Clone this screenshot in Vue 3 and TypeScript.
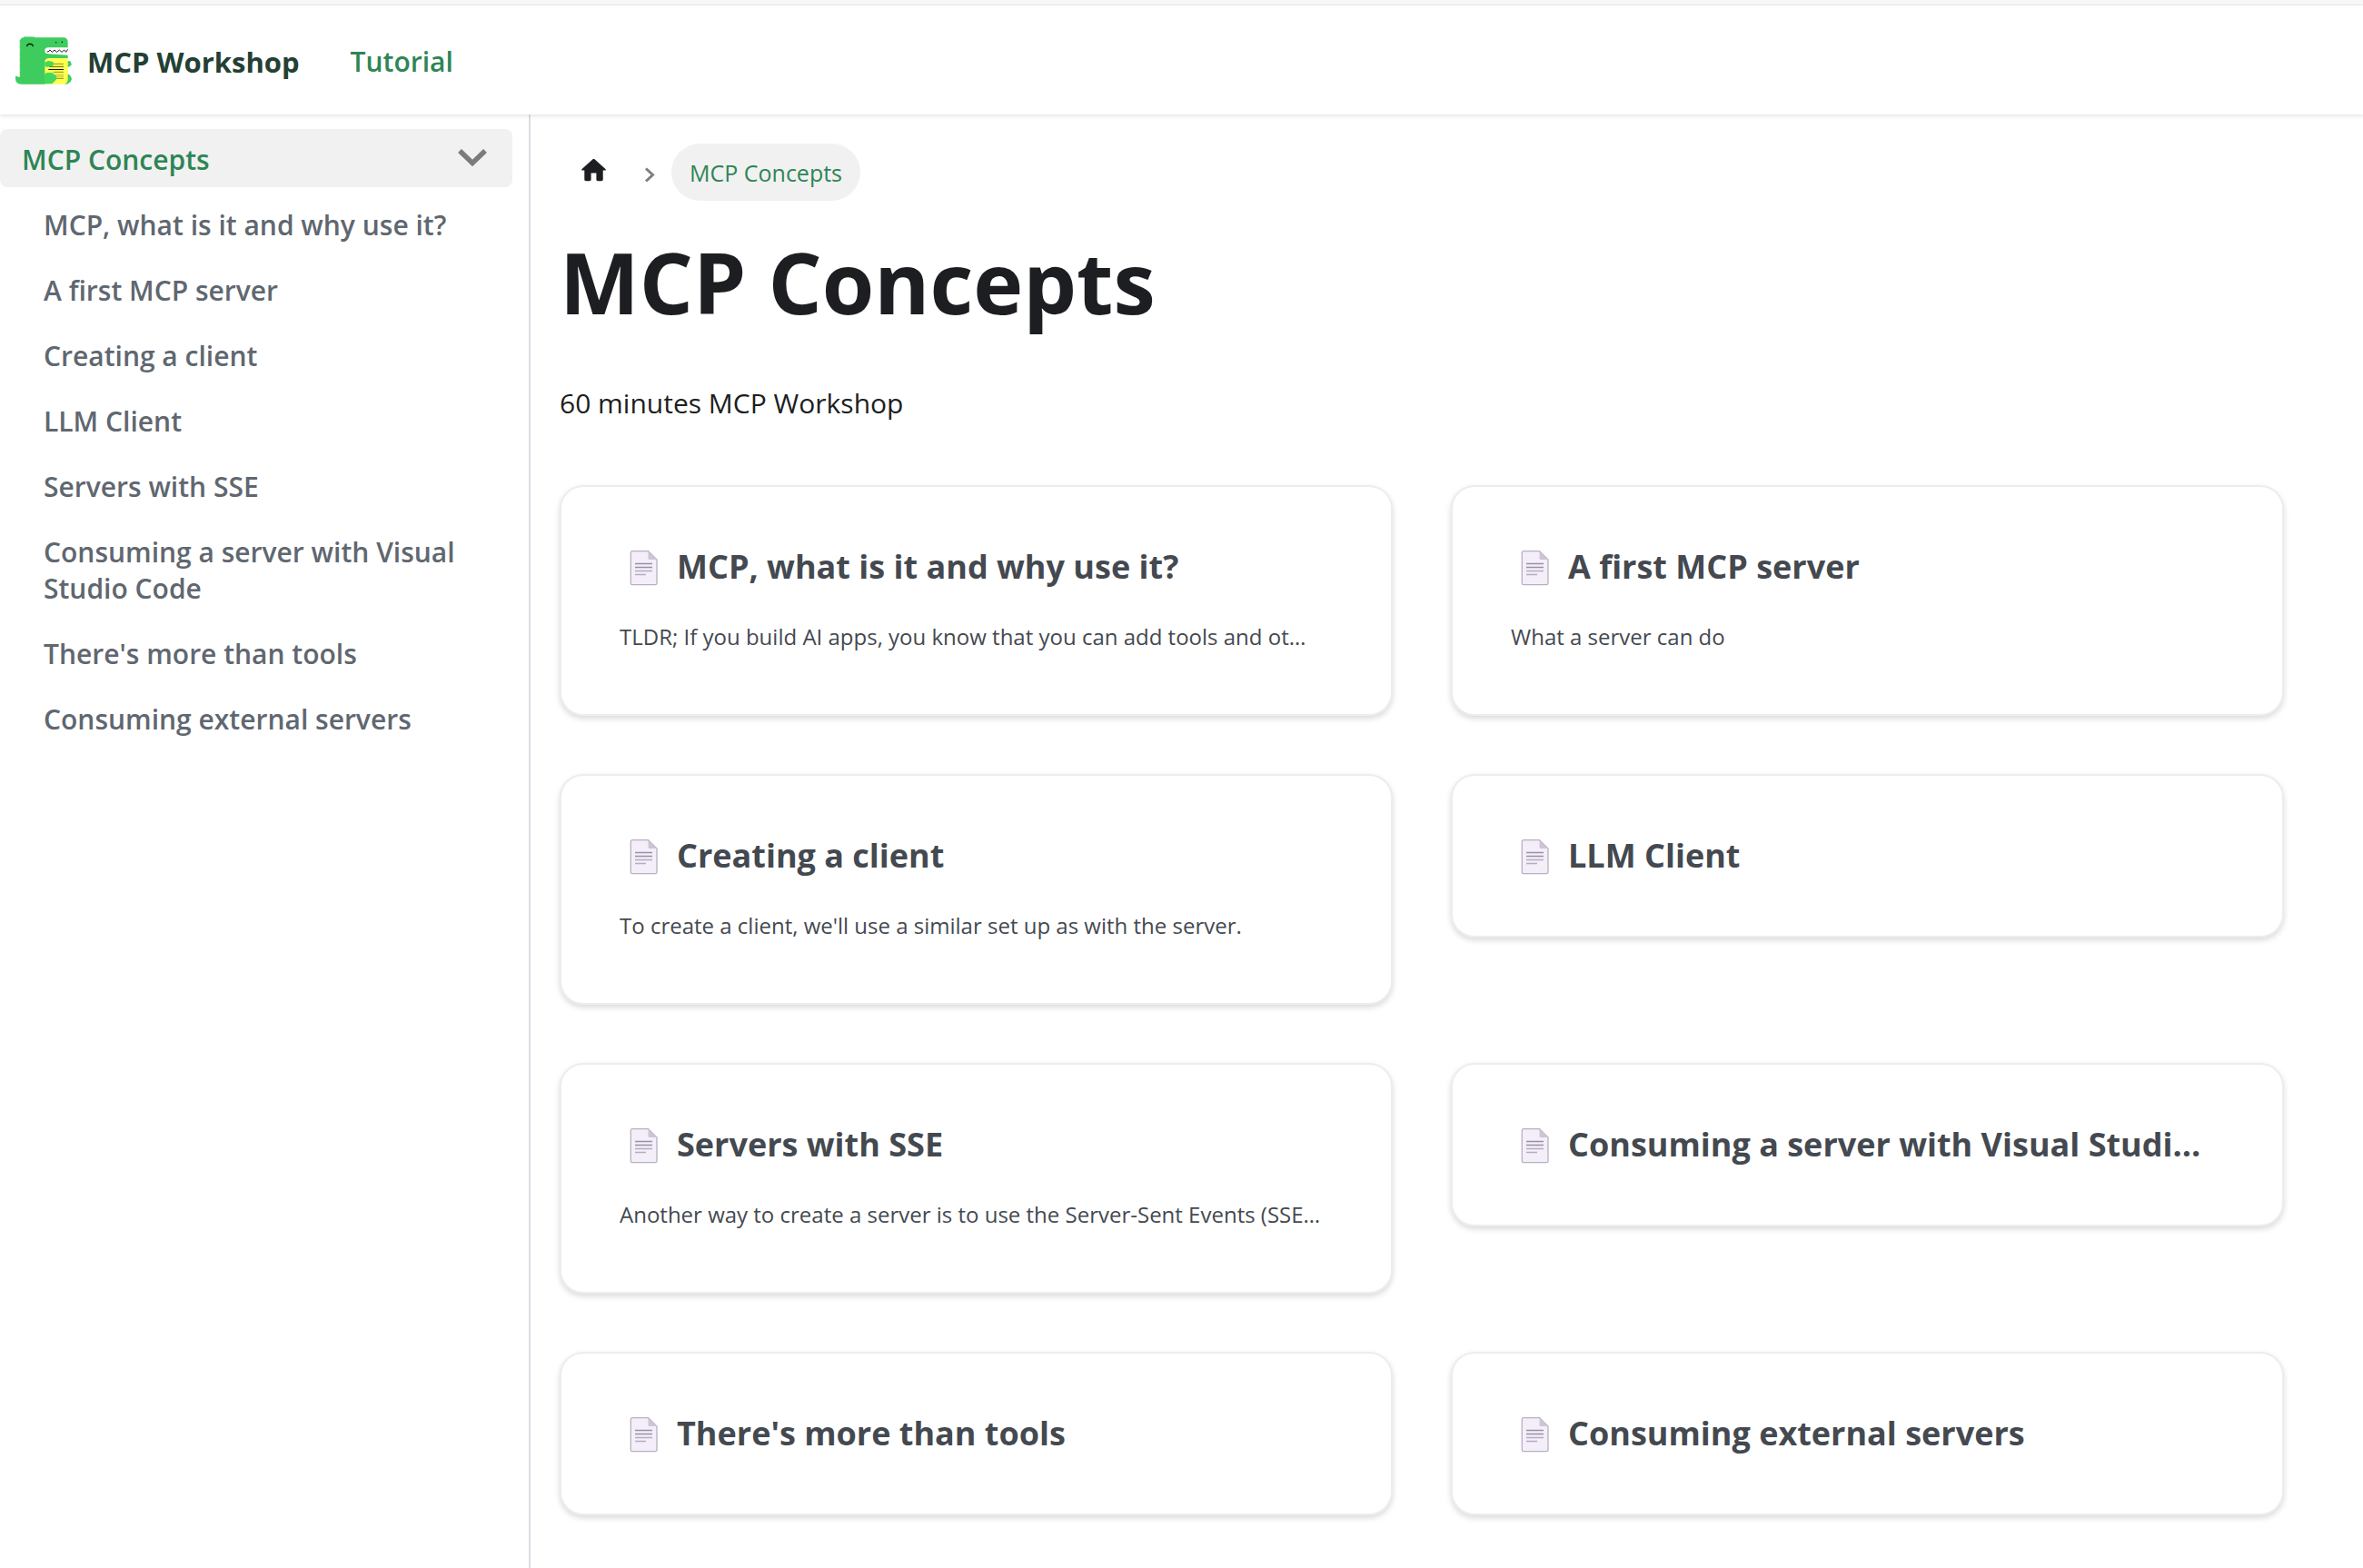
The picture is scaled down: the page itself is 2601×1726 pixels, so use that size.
<script setup lang="ts">
import { ref } from 'vue'

interface Doc {
  title: string
  cardTitle?: string
  description?: string
}

const expanded = ref(true)

const docs: Doc[] = [
  {
    title: 'MCP, what is it and why use it?',
    description: 'TLDR; If you build AI apps, you know that you can add tools and ot…',
  },
  { title: 'A first MCP server', description: 'What a server can do' },
  {
    title: 'Creating a client',
    description: "To create a client, we'll use a similar set up as with the server.",
  },
  { title: 'LLM Client' },
  {
    title: 'Servers with SSE',
    description: 'Another way to create a server is to use the Server-Sent Events (SSE…',
  },
  {
    title: 'Consuming a server with Visual Studio Code',
    cardTitle: 'Consuming a server with Visual Studi…',
  },
  { title: "There's more than tools" },
  { title: 'Consuming external servers' },
]

// Scales running down the back of the dinosaur
const scales: number[] = Array.from({ length: 17 }, (_, i) => 75 + i * 7)
const crest: number[] = [82, 89, 96, 103, 110]
</script>

<template>
  <div class="page">
    <div class="strip"></div>
    <header class="navbar">
      <a class="brand" href="#">
        <svg class="logo" viewBox="48 42 192 192" aria-hidden="true">
          <g fill="#3ecc5f">
            <circle v-for="y in scales" :key="'s' + y" cx="68" :cy="y" r="3.4" />
            <circle v-for="x in crest" :key="'c' + x" :cx="x" cy="64" r="3.6" />
            <path d="M67 76Q67 64 79 64H208Q224 64 224 80V132H160L150 152V218H70Q51 218 51 199V195Q51 190 56 192Q61 197 67 192Z" />
            <circle cx="228" cy="147" r="6" />
            <circle cx="230" cy="152" r="6" />
            <circle cx="226" cy="156" r="5" />
            <path d="M220 184q10 0 11 6q6 3 4 7q5 4 0 8q0 7-6 8q-5 6-15 5z" />
          </g>
          <path fill="#fff" d="M225 97H159Q148 97 148 107.500Q148 118 159 118L225 122Z" />
          <polyline
            points="155,110 159,111 165,105 172,112 180,105 188,112 196,105 204,112 212,105 218,112 224,103"
            fill="none"
            stroke="#000"
            stroke-width="2.600"
            stroke-linejoin="round"
          />
          <path fill="#ffff50" d="M163 132H224V202Q224 218 208 218H148V141Q151 132 163 132Z" />
          <g fill="none" stroke="#000">
            <path stroke="#55551f" stroke-width="2" d="M174 151H210M176 178H210M184 199H210" />
            <path stroke-width="2.800" d="M160 169.500H210" />
            <path stroke="#33330f" stroke-width="2.400" d="M162 160H210" />
            <path stroke="#b0b03a" stroke-width="2.400" d="M184 187.500H210M186 193H210" />
            <path stroke-width="3.500" d="M89 94Q89 85 99 85Q109 85 109 94" />
          </g>
          <g fill="#44d860">
            <path d="M148 143q5 3 9-1q6-3 10 1q7-2 9 3q3 5 0 9q-5 6-10 4q-6 4-18 1z" />
            <path d="M147 186q6-8 16-6q10-3 15 5q9 2 9 12q0 8-8 12q-4 8-16 8h-16z" />
          </g>
          <circle cx="185" cy="80" r="2" />
          <circle cx="205" cy="79" r="2.300" />
        </svg>
        <b class="brand-name">MCP Workshop</b>
      </a>
      <nav>
        <a class="nav-link" href="#">Tutorial</a>
      </nav>
    </header>

    <div class="body">
      <aside class="sidebar">
        <div class="category">
          <a class="menu-link active" href="#">MCP Concepts</a>
          <button
            class="caret"
            type="button"
            aria-label="Toggle MCP Concepts"
            :aria-expanded="expanded"
            @click="expanded = !expanded"
          >
            <svg width="32" height="20" viewBox="0 0 32 20" aria-hidden="true">
              <path d="M2 2L16 15.400L30 2" fill="none" stroke="#7b7b7b" stroke-width="5.500" />
            </svg>
          </button>
        </div>
        <ul v-if="expanded" class="menu">
          <li v-for="doc in docs" :key="doc.title">
            <a class="menu-link" href="#">{{ doc.title }}</a>
          </li>
        </ul>
      </aside>

      <main class="content">
        <nav class="breadcrumbs" aria-label="Breadcrumbs">
          <a class="home" href="#" aria-label="Home page">
            <svg width="35" height="35" viewBox="0 0 24 24" aria-hidden="true">
              <path
                fill="#1c1e21"
                d="M10 19v-5h4v5c0 .55.45 1 1 1h3c.55 0 1-.45 1-1v-7h1.700c.46 0 .68-.57.33-.87L12.670 3.600c-.38-.34-.96-.34-1.340 0l-8.360 7.530c-.34.3-.13.87.33.87H5v7c0 .55.45 1 1 1h3c.55 0 1-.45 1-1z"
              />
            </svg>
          </a>
          <svg class="separator" width="48" height="24" viewBox="0 0 48 24" aria-hidden="true">
            <path d="M20 7.500L27.500 14.500L20 21.500" fill="none" stroke="#7f7f7f" stroke-width="3" />
          </svg>
          <span class="crumb">MCP Concepts</span>
        </nav>

        <h1>MCP Concepts</h1>
        <p class="intro">60 minutes MCP Workshop</p>

        <section class="cards">
          <a v-for="doc in docs" :key="doc.title" class="card" href="#">
            <h2>
              <svg class="doc-icon" width="52" height="48" viewBox="0 0 52 48" aria-hidden="true">
                <path
                  d="M14 6.700H31.500L41 16V42q0 1.700-1.700 1.700H14q-1.700 0-1.700-1.700V8.400q0-1.700 1.700-1.700z"
                  fill="#f4eef9"
                  stroke="#b8b0c2"
                  stroke-width="1.300"
                />
                <path d="M31.500 6.700V14.500q0 1.500 1.500 1.500H41z" fill="#cdc5d6" />
                <path d="M17 20.500H36M17 24.500H36" stroke="#998fa8" stroke-width="1.400" />
                <path d="M17 28.500H36M17 32.500H29" stroke="#b5acc3" stroke-width="1.600" />
              </svg>
              <span>{{ doc.cardTitle ?? doc.title }}</span>
            </h2>
            <p v-if="doc.description">{{ doc.description }}</p>
          </a>
        </section>
      </main>
    </div>
  </div>
</template>

<style>
body {
  margin: 0;
  background: #fff;
}
</style>

<style scoped>
.page {
  display: flex;
  flex-direction: column;
  min-height: 100vh;
  box-sizing: border-box;
  color: #1c1e21;
  font-family: 'Open Sans', 'Noto Sans', sans-serif;
  font-size: 30px;
}

.page a {
  text-decoration: none;
}

.strip {
  height: 5px;
  background: #f7f7f7;
  border-bottom: 1px solid #e8e8e8;
}

.navbar {
  position: relative;
  display: flex;
  align-items: center;
  gap: 56px;
  height: 120px;
  padding: 0 16px;
  background: #fff;
  box-shadow: 0 2px 4px rgba(0, 0, 0, 0.1);
}

.brand {
  display: flex;
  align-items: center;
  gap: 16px;
  color: #234033;
}

.logo {
  width: 64px;
  height: 64px;
}

.brand-name,
.nav-link {
  display: block;
  padding-top: 3px;
  line-height: 40px;
}

.brand-name {
  font-size: 31px;
  font-weight: 700;
}

.nav-link {
  color: #2e8555;
  font-weight: 600;
}

.body {
  display: flex;
  flex: 1;
}

.sidebar {
  flex: 0 0 584px;
  box-sizing: border-box;
  padding: 16px 18px 16px 0;
  border-right: 2px solid #dadde1;
}

.category {
  display: flex;
  align-items: center;
  border-radius: 8px;
  background: #f1f1f1;
}

.category .menu-link {
  flex: 1;
}

.caret {
  display: flex;
  padding: 12px 28px;
  border: 0;
  background: none;
  cursor: pointer;
}

.menu {
  display: flex;
  flex-direction: column;
  gap: 8px;
  margin: 8px 0 0;
  padding: 0 0 0 24px;
  list-style: none;
}

.menu-link {
  display: block;
  padding: 14px 24px 10px;
  color: #606770;
  font-weight: 600;
  line-height: 40px;
}

.menu-link.active {
  color: #2e8555;
}

.content {
  flex: 1;
  min-width: 0;
  padding: 32px 87px 48px 32px;
}

.breadcrumbs {
  display: flex;
  align-items: center;
}

.home {
  display: flex;
  padding: 0 20px 4px;
}

.crumb {
  padding: 13px 20px 11px;
  border-radius: 32px;
  background: #f1f1f1;
  color: #2e8555;
  font-size: 25px;
  line-height: 39px;
}

h1 {
  margin: 29px 0 47px;
  font-size: 93px;
  font-weight: 700;
  line-height: 120px;
}

.intro {
  margin: 0 0 64px;
  line-height: 53px;
}

.cards {
  display: grid;
  grid-template-columns: repeat(2, minmax(0, 1fr));
  align-items: start;
  gap: 64px;
}

.card {
  padding: 64px;
  border: 2px solid #ebedf0;
  border-radius: 26px;
  background: #fff;
  box-shadow: 0 3px 6px rgba(0, 0, 0, 0.15);
  color: #444950;
}

.card h2 {
  display: flex;
  align-items: center;
  gap: 11px;
  margin: 0;
  font-size: 36px;
  font-weight: 700;
  line-height: 48px;
  white-space: nowrap;
}

.doc-icon {
  flex: none;
}

.card p {
  margin: 32px 0 0;
  font-size: 24px;
  line-height: 42px;
  white-space: nowrap;
}
</style>
